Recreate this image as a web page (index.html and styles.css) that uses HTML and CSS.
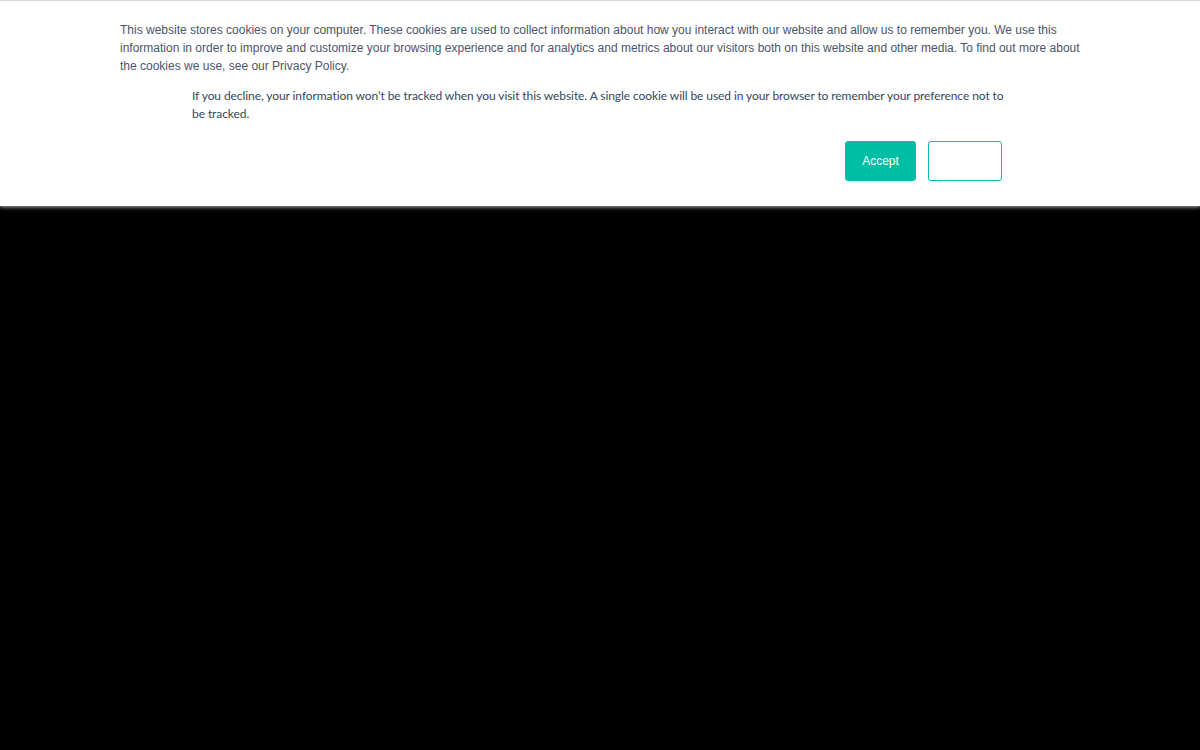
FILE: index.html
```html
<!DOCTYPE html>
<html>
<head>
<meta charset="utf-8">
<link rel="stylesheet" href="styles.css">
</head>
<body>
<div class="banner">
  <div class="inner">
    <p class="policy">This website stores cookies on your computer. These cookies are used to collect information about how you interact with our website and allow us to remember you. We use this information in order to improve and customize your browsing experience and for analytics and metrics about our visitors both on this website and other media. To find out more about the cookies we use, see our Privacy Policy.</p>
    <div class="decline-area">
      <p class="decline-text">If you decline, your information won’t be tracked when you visit this website. A single cookie will be used in your browser to remember your preference not to be tracked.</p>
      <div class="buttons">
        <button class="btn accept">Accept</button>
        <button class="btn decline">Decline</button>
      </div>
    </div>
  </div>
</div>
</body>
</html>
```
FILE: styles.css
```css
html, body {
  margin: 0;
  padding: 0;
  background: #000;
  height: 100%;
}
.banner {
  background: #fff;
  border-top: 1px solid #d6d6de;
  box-shadow: 0 1px 4px rgba(200,200,200,0.9);
  height: 206px;
  box-sizing: border-box;
}
.inner {
  padding: 20px 120px 0 120px;
}
.policy {
  margin: 0;
  font-family: "Liberation Sans", Arial, sans-serif;
  font-size: 12px;
  line-height: 18px;
  color: #4a5568;
}
.decline-area {
  margin: 12px 72px 0 72px;
}
.decline-text {
  margin: 0;
  font-family: Lato, sans-serif;
  font-size: 12px;
  line-height: 18px;
  color: #33475b;
  letter-spacing: -0.08px;
}
.buttons {
  display: flex;
  justify-content: flex-end;
  gap: 12px;
  margin-top: 18px;
  padding-right: 6px;
}
.btn {
  height: 40px;
  border-radius: 3px;
  font-family: "Liberation Sans", Arial, sans-serif;
  font-size: 12px;
  border: 1px solid #00bda5;
  padding: 0;
}
.accept {
  width: 71px;
  background: #00bda5;
  color: #fff;
}
.decline {
  width: 74px;
  background: #fff;
  color: #fff;
}
```
